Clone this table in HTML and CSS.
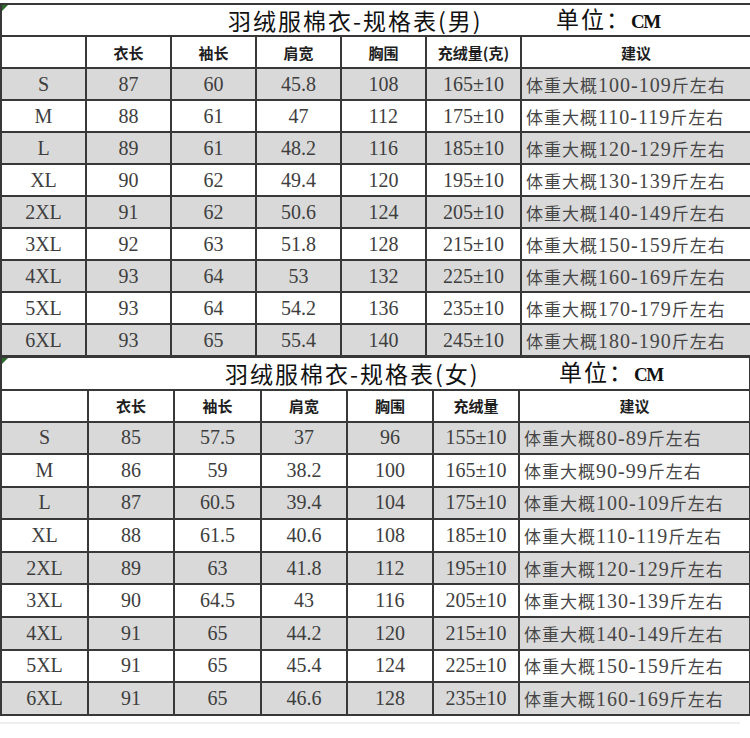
FILE: index.html
```html
<!DOCTYPE html>
<html lang="zh-CN">
<head>
<meta charset="utf-8">
<title>羽绒服棉衣-规格表</title>
<link rel="stylesheet" href="styles.css">
</head>
<body>
<div class="page">
  <table class="sheet t1">
    <colgroup>
      <col class="c1"><col class="c2"><col class="c3"><col class="c4"><col class="c5"><col class="c6"><col class="c7">
    </colgroup>
    <tr class="title">
      <td colspan="7" class="title-cell">
        <div class="title-line">
          <span class="title-text">羽绒服棉衣-规格表(男)</span>
          <span class="unit">单位：<b class="cm">CM</b></span>
        </div>
      </td>
    </tr>
    <tr class="hd">
      <td></td><td>衣长</td><td>袖长</td><td>肩宽</td><td>胸围</td><td>充绒量(克)</td><td>建议</td>
    </tr>
    <tr class="g"><td>S</td><td>87</td><td>60</td><td>45.8</td><td>108</td><td>165±10</td><td class="sug">体重大概<span class="n">100-109</span>斤左右</td></tr>
    <tr><td>M</td><td>88</td><td>61</td><td>47</td><td>112</td><td>175±10</td><td class="sug">体重大概<span class="n">110-119</span>斤左右</td></tr>
    <tr class="g"><td>L</td><td>89</td><td>61</td><td>48.2</td><td>116</td><td>185±10</td><td class="sug">体重大概<span class="n">120-129</span>斤左右</td></tr>
    <tr><td>XL</td><td>90</td><td>62</td><td>49.4</td><td>120</td><td>195±10</td><td class="sug">体重大概<span class="n">130-139</span>斤左右</td></tr>
    <tr class="g"><td>2XL</td><td>91</td><td>62</td><td>50.6</td><td>124</td><td>205±10</td><td class="sug">体重大概<span class="n">140-149</span>斤左右</td></tr>
    <tr><td>3XL</td><td>92</td><td>63</td><td>51.8</td><td>128</td><td>215±10</td><td class="sug">体重大概<span class="n">150-159</span>斤左右</td></tr>
    <tr class="g"><td>4XL</td><td>93</td><td>64</td><td>53</td><td>132</td><td>225±10</td><td class="sug">体重大概<span class="n">160-169</span>斤左右</td></tr>
    <tr><td>5XL</td><td>93</td><td>64</td><td>54.2</td><td>136</td><td>235±10</td><td class="sug">体重大概<span class="n">170-179</span>斤左右</td></tr>
    <tr class="g"><td>6XL</td><td>93</td><td>65</td><td>55.4</td><td>140</td><td>245±10</td><td class="sug">体重大概<span class="n">180-190</span>斤左右</td></tr>
  </table>

  <table class="sheet t2">
    <colgroup>
      <col class="d1"><col class="d2"><col class="d3"><col class="d4"><col class="d5"><col class="d6"><col class="d7">
    </colgroup>
    <tr class="title">
      <td colspan="7" class="title-cell">
        <div class="title-line">
          <span class="title-text">羽绒服棉衣-规格表(女)</span>
          <span class="unit">单位：<b class="cm">CM</b></span>
        </div>
      </td>
    </tr>
    <tr class="hd">
      <td></td><td>衣长</td><td>袖长</td><td>肩宽</td><td>胸围</td><td>充绒量</td><td>建议</td>
    </tr>
    <tr class="g"><td>S</td><td>85</td><td>57.5</td><td>37</td><td>96</td><td>155±10</td><td class="sug">体重大概<span class="n">80-89</span>斤左右</td></tr>
    <tr><td>M</td><td>86</td><td>59</td><td>38.2</td><td>100</td><td>165±10</td><td class="sug">体重大概<span class="n">90-99</span>斤左右</td></tr>
    <tr class="g"><td>L</td><td>87</td><td>60.5</td><td>39.4</td><td>104</td><td>175±10</td><td class="sug">体重大概<span class="n">100-109</span>斤左右</td></tr>
    <tr><td>XL</td><td>88</td><td>61.5</td><td>40.6</td><td>108</td><td>185±10</td><td class="sug">体重大概<span class="n">110-119</span>斤左右</td></tr>
    <tr class="g"><td>2XL</td><td>89</td><td>63</td><td>41.8</td><td>112</td><td>195±10</td><td class="sug">体重大概<span class="n">120-129</span>斤左右</td></tr>
    <tr><td>3XL</td><td>90</td><td>64.5</td><td>43</td><td>116</td><td>205±10</td><td class="sug">体重大概<span class="n">130-139</span>斤左右</td></tr>
    <tr class="g"><td>4XL</td><td>91</td><td>65</td><td>44.2</td><td>120</td><td>215±10</td><td class="sug">体重大概<span class="n">140-149</span>斤左右</td></tr>
    <tr><td>5XL</td><td>91</td><td>65</td><td>45.4</td><td>124</td><td>225±10</td><td class="sug">体重大概<span class="n">150-159</span>斤左右</td></tr>
    <tr class="g"><td>6XL</td><td>91</td><td>65</td><td>46.6</td><td>128</td><td>235±10</td><td class="sug">体重大概<span class="n">160-169</span>斤左右</td></tr>
  </table>
  <div class="fade-line"></div>
</div>
</body>
</html>
```
FILE: styles.css
```css
html, body {
  margin: 0;
  padding: 0;
  background: #ffffff;
}

.page {
  width: 750px;
  padding-top: 3px;
}

.sheet {
  border-collapse: collapse;
  table-layout: fixed;
  width: 750px;
}

.t2 {
  width: 749px;
}

.c1, .c2, .c3, .c4, .c5 { width: 85px; }
.c6 { width: 95px; }
.c7 { width: 230px; }

.d1 { width: 87px; }
.d2 { width: 86px; }
.d3 { width: 87px; }
.d4 { width: 86px; }
.d5 { width: 86px; }
.d6 { width: 86px; }
.d7 { width: 231px; }

.sheet td {
  border: 2px solid #383838;
  padding: 0;
  text-align: center;
  vertical-align: middle;
  font-family: "Liberation Serif", "Noto Sans CJK SC", serif;
  font-size: 20px;
  color: #3e3e3e;
  white-space: nowrap;
}

.sheet tr { height: 32px; }
.t2 tr { height: 32.6px; }
.t2 tr.title, .t2 tr.hd { height: 32px; }

.t2 tr.title td { border-top-width: 1px; }

.sheet tr.g td { background: #d9d9d9; }

.sheet tr.hd td {
  font-family: "Noto Sans CJK SC", sans-serif;
  font-weight: 700;
  font-size: 15px;
  color: #1e1e1e;
}

.sheet td.title-cell {
  position: relative;
  text-align: left;
  font-family: "Noto Sans CJK SC", sans-serif;
  color: #111111;
}

.sheet td.title-cell::before {
  content: "";
  position: absolute;
  left: 0;
  top: 0;
  border-top: 6px solid #2f6b2f;
  border-right: 6px solid transparent;
}

.title-line {
  display: flex;
  align-items: center;
  height: 30px;
}

.t1 .title-line { padding-left: 226px; }
.t2 .title-line { padding-left: 223px; }

.title-text {
  font-size: 23px;
  letter-spacing: 2px;
  line-height: 30px;
}

.t1 .title-text { width: 328px; }
.t2 .title-text { width: 334px; }

.unit {
  font-size: 23px;
  letter-spacing: 2px;
  line-height: 30px;
}

.cm {
  font-family: "Liberation Serif", serif;
  font-weight: 700;
  font-size: 19px;
  letter-spacing: -1.5px;
}

.sheet td.sug {
  text-align: left;
  padding-left: 4px;
  font-family: "Noto Sans CJK SC", sans-serif;
  font-size: 17px;
  letter-spacing: 1px;
  color: #464646;
}

.sug .n {
  font-family: "Liberation Serif", serif;
  font-size: 20px;
}

.fade-line {
  margin-top: 6px;
  width: 740px;
  height: 2px;
  background: #efefef;
}
```
